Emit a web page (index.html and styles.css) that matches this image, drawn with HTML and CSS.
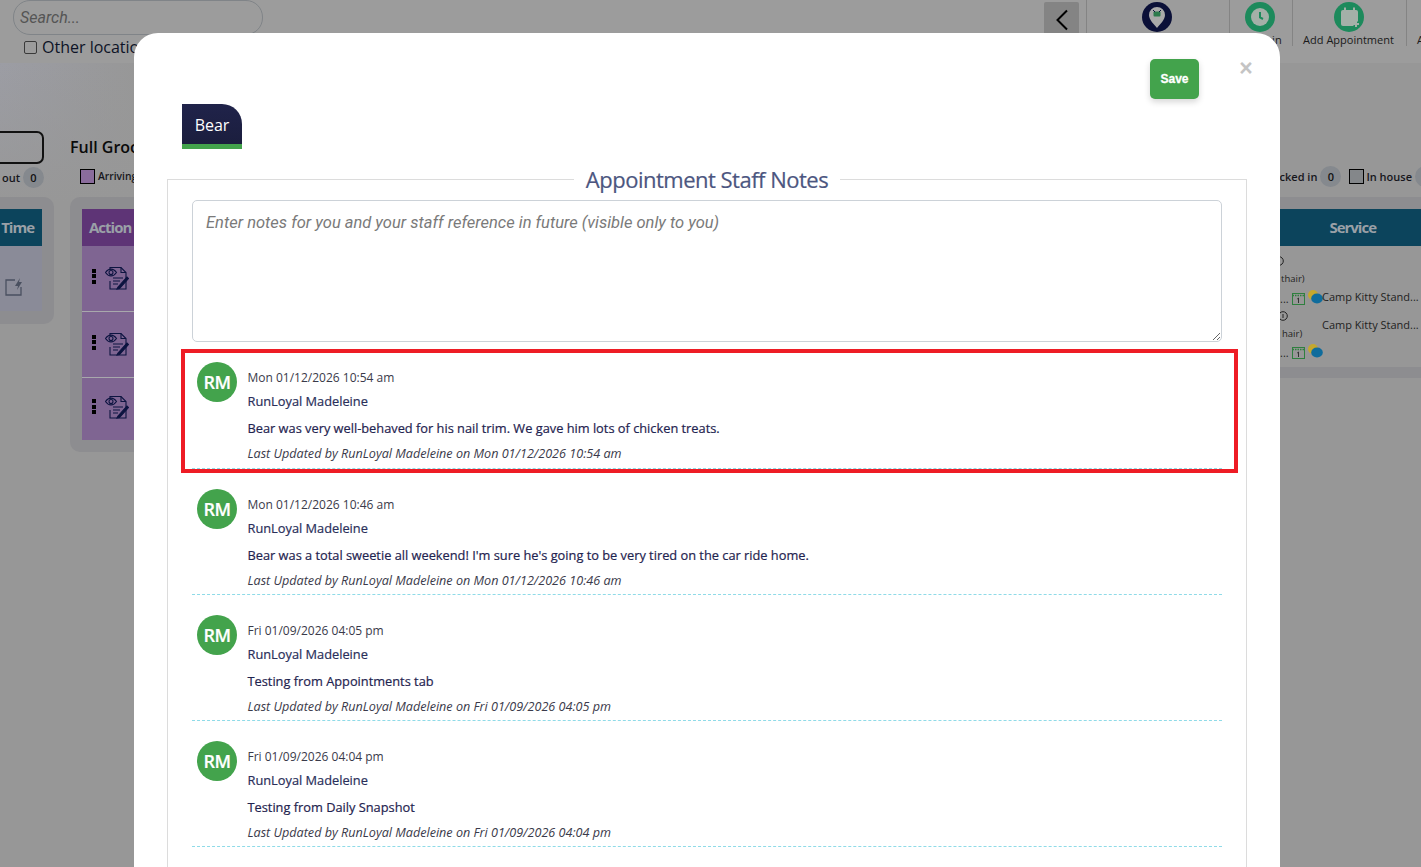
FILE: index.html
```html
<!DOCTYPE html>
<html lang="en">
<head>
<meta charset="utf-8">
<title>Appointment Staff Notes</title>
<link rel="stylesheet" href="styles.css">
</head>
<body>
<div class="app">
  <header class="topbar">
    <div class="search-block">
      <div class="search-input">Search...</div>
      <label class="other-loc"><span class="check"></span>Other locations</label>
    </div>
    <div class="nav">
      <button class="back"><svg width="14" height="22" viewBox="0 0 14 22"><path d="M12 1.500 2.500 11l9.500 9.500" fill="none" stroke="#000" stroke-width="2"/></svg></button>
      <div class="nav-item w143"><span class="nav-icon navy"><svg width="30" height="30" viewBox="0 0 30 30"><path d="M15 5a8 8 0 0 1 8 8c0 5-5 9-8 13-3-4-8-8-8-13a8 8 0 0 1 8-8z" fill="#a9a9a9"/><rect x="11.500" y="9.500" width="7" height="5" rx="1" fill="#2d7a4c"/><path d="M11 8l2 2M19 8l-2 2" stroke="#0b1038" stroke-width="1"/></svg></span></div>
      <div class="nav-item w63"><span class="nav-icon green"><svg width="30" height="30" viewBox="0 0 30 30"><circle cx="15" cy="15" r="9" fill="#a4b0a8"/><path d="M15 10v5.500l3 1.500" fill="none" stroke="#1d8a5c" stroke-width="2"/></svg></span><span class="nav-label">Check in</span></div>
      <div class="nav-item w114"><span class="nav-icon green"><svg width="30" height="30" viewBox="0 0 30 30"><path d="M9 8h13a2 2 0 0 1 2 2v9l-5 5H9a2 2 0 0 1-2-2V10a2 2 0 0 1 2-2z" fill="#a4b0a8"/><path d="M11 5.500v4M20 5.500v4" stroke="#a4b0a8" stroke-width="2"/><path d="M22 19v6M19 22h6" stroke="#a4b0a8" stroke-width="2"/></svg></span><span class="nav-label">Add Appointment</span></div>
      <div class="nav-item w15"><span class="nav-label">A</span></div>
    </div>
  </header>

  <main class="board">
    <div class="filters">
      <div class="filter-left">
        <div class="pill"></div>
        <span class="legend-text">out</span><span class="count">0</span>
      </div>
      <div class="filter-mid">
        <div class="group-title">Full Grooming</div>
        <div class="legend-item"><span class="swatch purple"></span>Arriving</div>
      </div>
      <div class="filter-right">
        <span class="legend-text">Checked in</span><span class="count">0</span>
        <span class="swatch gray"></span><span class="legend-text">In house</span><span class="count"></span>
      </div>
    </div>
    <div class="panels">
      <section class="panel panel-a">
        <div class="thead teal">Time</div>
        <div class="trow-a"><svg width="20" height="20" viewBox="0 0 20 20"><path d="M11 3H2v15h15v-8" fill="none" stroke="#4a5060" stroke-width="1.300"/><path d="M16 1l-5 8h3l-1 4 5-8h-3z" fill="#4a5060"/></svg></div>
      </section>
      <section class="panel panel-b">
        <div class="thead violet">Action</div>
        <div class="trow-b h66"><span class="dots"></span><svg class="note-ico" width="24" height="24" viewBox="0 0 24 24"><use href="#note"/></svg></div>
        <div class="trow-b h66"><span class="dots"></span><svg class="note-ico" width="24" height="24" viewBox="0 0 24 24"><use href="#note"/></svg></div>
        <div class="trow-b h62"><span class="dots"></span><svg class="note-ico" width="24" height="24" viewBox="0 0 24 24"><use href="#note"/></svg></div>
      </section>
      <section class="panel panel-c">
        <div class="thead blue">Service</div>
        <div class="service-rows">
          <div class="svc-left">
            <span class="s0"><svg width="4" height="10" viewBox="0 0 4 10"><circle cx="-1" cy="5" r="4.300" fill="none" stroke="#222"/></svg></span>
            <span class="s1">thair)</span>
            <span class="s2">...<svg class="cal" width="13" height="13" viewBox="0 0 13 13"><use href="#cal"/></svg><svg class="chat" width="15" height="14" viewBox="0 0 15 14"><use href="#chat"/></svg></span>
            <span class="s3"><svg width="10" height="10" viewBox="0 0 10 10"><circle cx="3" cy="5" r="4.300" fill="none" stroke="#222"/><path d="M3 3v4" stroke="#222"/></svg></span>
            <span class="s4">hair)</span>
            <span class="s5">...<svg class="cal" width="13" height="13" viewBox="0 0 13 13"><use href="#cal"/></svg><svg class="chat" width="15" height="14" viewBox="0 0 15 14"><use href="#chat"/></svg></span>
          </div>
          <div class="svc-right">
            <span>Camp Kitty Stand...</span>
            <span>Camp Kitty Stand...</span>
          </div>
        </div>
      </section>
    </div>
  </main>
</div>

<svg class="defs" width="0" height="0">
  <defs>
    <g id="note" fill="none" stroke="#0d1440" stroke-width="1.100">
      <path d="M5 4V1.500h11l5 5V23H5v-8"/>
      <path d="M16 1.500v5h5"/>
      <path d="M.5 6.500c3-4.500 8-4.500 11 0-3 4.500-8 4.500-11 0z"/>
      <circle cx="6" cy="6.500" r="2"/>
      <path d="M8 12h10M8 15h7M8 18h5"/>
      <path d="M13 21l9-10 1.500 1.500-9 10-2.500 .5z" fill="#0d1440"/>
    </g>
    <g id="cal" fill="none" stroke="#2f7f3f">
      <rect x=".5" y="1.500" width="12" height="11"/>
      <path d="M.5 3.500h12" stroke-width="1.500" stroke-dasharray="1.500 1"/>
      <path d="M6.500 6v5M5.200 7l1.300-1" stroke="#333"/>
    </g>
    <g id="chat">
      <ellipse cx="5" cy="5" rx="5" ry="5" fill="#c4a82e"/>
      <ellipse cx="9" cy="8.500" rx="5.800" ry="5" fill="#0f6c9c"/>
    </g>
  </defs>
</svg>

<div class="modal" role="dialog">
  <div class="modal-actions">
    <button class="save">Save</button>
    <span class="close">×</span>
  </div>
  <div class="tabs"><div class="tab">Bear</div></div>
  <fieldset class="notes-box">
    <legend class="notes-title">Appointment Staff Notes</legend>
    <textarea class="notes-input" placeholder="Enter notes for you and your staff reference in future (visible only to you)"></textarea>
    <div class="note-list">
      <article class="note highlighted">
        <div class="avatar">RM</div>
        <div class="note-body">
          <div class="note-date">Mon 01/12/2026 10:54 am</div>
          <div class="note-author">RunLoyal Madeleine</div>
          <div class="note-text">Bear was very well-behaved for his nail trim. We gave him lots of chicken treats.</div>
          <div class="note-meta">Last Updated by RunLoyal Madeleine on Mon 01/12/2026 10:54 am</div>
        </div>
      </article>
      <article class="note">
        <div class="avatar">RM</div>
        <div class="note-body">
          <div class="note-date">Mon 01/12/2026 10:46 am</div>
          <div class="note-author">RunLoyal Madeleine</div>
          <div class="note-text">Bear was a total sweetie all weekend! I'm sure he's going to be very tired on the car ride home.</div>
          <div class="note-meta">Last Updated by RunLoyal Madeleine on Mon 01/12/2026 10:46 am</div>
        </div>
      </article>
      <article class="note">
        <div class="avatar">RM</div>
        <div class="note-body">
          <div class="note-date">Fri 01/09/2026 04:05 pm</div>
          <div class="note-author">RunLoyal Madeleine</div>
          <div class="note-text">Testing from Appointments tab</div>
          <div class="note-meta">Last Updated by RunLoyal Madeleine on Fri 01/09/2026 04:05 pm</div>
        </div>
      </article>
      <article class="note">
        <div class="avatar">RM</div>
        <div class="note-body">
          <div class="note-date">Fri 01/09/2026 04:04 pm</div>
          <div class="note-author">RunLoyal Madeleine</div>
          <div class="note-text">Testing from Daily Snapshot</div>
          <div class="note-meta">Last Updated by RunLoyal Madeleine on Fri 01/09/2026 04:04 pm</div>
        </div>
      </article>
    </div>
  </fieldset>
</div>
```

FILE: styles.css
```css
*, *::before, *::after { box-sizing: border-box; }
html, body { margin: 0; height: 100%; overflow: hidden; }
body { font-family: "Open Sans", sans-serif; color: #000; background: #979797; }
.defs { position: absolute; }

.app { height: 867px; overflow: hidden; }

.topbar { height: 63px; background: #9c9c9c; display: flex; justify-content: space-between; padding-left: 13px; }
.search-block { width: 250px; }
.search-input { height: 35px; border: 1px solid #808488; border-radius: 17px; padding: 7px 6px; font: italic 16px/20px Roboto, sans-serif; color: #555; }
.other-loc { display: flex; align-items: center; gap: 5px; margin: 2px 0 0 11px; font-size: 16px; line-height: 20px; color: #0d1326; white-space: nowrap; }
.check { width: 13px; height: 13px; border: 1px solid #3a3a3a; border-radius: 2px; background: #9c9c9c; }

.nav { display: flex; align-items: flex-start; }
.back { width: 35px; height: 36px; margin: 2px 7px 0 0; padding: 0; border: 0; border-radius: 2px; background: #848484; display: flex; align-items: center; justify-content: center; }
.nav-item { height: 46px; border-left: 1px solid #848484; display: flex; flex-direction: column; align-items: center; }
.w143 { width: 143px; padding-right: 2px; }
.w63 { width: 63px; padding-right: 2px; }
.w114 { width: 114px; padding-right: 2px; }
.w15 { width: 15px; overflow: hidden; align-items: flex-start; padding: 32px 0 0 10px; }
.w15 .nav-label { margin-top: 0; }
.nav-icon { width: 30px; height: 30px; border-radius: 50%; margin-top: 2px; flex: none; }
.nav-icon svg { display: block; }
.navy { background: #0b1038; }
.green { background: #1d8a5c; }
.nav-label { font-size: 11px; line-height: 15px; color: #1a1a1a; white-space: nowrap; }

.board { height: 804px; background: linear-gradient(rgba(151, 151, 151, 0), #979797 140px), linear-gradient(90deg, #9c9da4, #979797 140px); padding-top: 68px; }
.filters { display: flex; height: 66px; }
.filter-left { width: 54px; flex: none; position: relative; }
.pill { width: 60px; height: 33px; margin-left: -16px; border: 2px solid #111; border-radius: 7px; }
.filter-left .legend-text { position: absolute; left: 2px; top: 39px; }
.filter-left .count { position: absolute; left: 23px; top: 36px; }
.legend-text { font-size: 11px; line-height: 15px; font-weight: 600; color: #16161c; white-space: nowrap; }
.count { width: 21px; height: 21px; border-radius: 50%; background: #85898e; font-size: 11px; font-weight: 600; line-height: 21px; text-align: center; color: #111; flex: none; }
.filter-mid { margin-left: 16px; flex: none; width: 400px; }
.group-title { font-size: 16px; font-weight: 600; line-height: 22px; color: #0a0a0a; margin-top: 5px; }
.legend-item { display: flex; align-items: center; gap: 3px; margin: 11px 0 0 10px; font-size: 10.300px; font-weight: 600; color: #16161c; line-height: 15px; }
.swatch { width: 15px; height: 15px; border: 1px solid #000; flex: none; }
.purple { background: #8a6c9c; }
.gray { background: #84878a; }
.filter-right { margin-left: auto; display: flex; align-items: center; gap: 3px; height: 21px; margin-top: 35px; margin-right: -15px; }
.filter-right .swatch { margin: 0 -1px 0 5px; }

.panels { display: flex; align-items: flex-start; gap: 16px; }
.panel { background: #8d8d90; border-radius: 10px; padding: 12px 0; }
.panel-a { width: 54px; height: 127px; flex: none; padding-right: 12px; border-radius: 0 10px 10px 0; }
.panel-b { width: 400px; height: 255px; flex: none; padding-left: 12px; }
.panel-c { flex: 1; height: 181px; border-radius: 0; padding: 12px 0 0; }
.thead { height: 37px; font-size: 15px; font-weight: 700; line-height: 37px; color: #9aa0a7; letter-spacing: -1px; }
.teal { background: #0c445c; text-align: right; padding-right: 8px; }
.violet { background: #5e3476; padding-left: 7px; }
.blue { background: #0c445c; text-align: right; padding-right: 45px; }
.trow-a { height: 65px; background: #8a8b98; display: flex; align-items: center; justify-content: flex-end; padding: 16px 18px 0 0; }
.trow-b { background: #7f6592; border-bottom: 1px solid #a8a8ac; display: flex; align-items: flex-start; }
.trow-b:last-child { border-bottom: 0; }
.h66 { height: 66px; }
.h62 { height: 62px; }
.dots { width: 4px; height: 15px; margin: 23px 0 0 10px; background: repeating-linear-gradient(#000 0 4px, transparent 4px 5.500px); }
.note-ico { margin: 20px 0 0 9px; }
.h62 .dots { margin-top: 21px; }
.h62 .note-ico { margin-top: 17px; }

.service-rows { height: 121px; background: #979797; display: flex; justify-content: flex-end; font-size: 11px; color: #1f1f22; }
.svc-left { width: 42px; position: relative; flex: none; }
.svc-left span { position: absolute; right: 0; left: 0; white-space: nowrap; line-height: 15px; }
.s0 { top: 8px; }
.s1 { top: 25px; padding-left: 1px; font-size: 9.500px; }
.s2 { top: 44px; }
.s3 { top: 63px; }
.s4 { top: 80px; font-size: 9.500px; padding-left: 2px; }
.s5 { top: 98px; }
.cal { margin-left: 3px; vertical-align: -2px; }
.chat { margin-left: 3px; vertical-align: -1px; }
.svc-right { width: 99px; flex: none; display: flex; flex-direction: column; gap: 13px; padding-top: 43px; line-height: 15px; white-space: nowrap; position: relative; }

.modal { position: absolute; left: 134px; top: 33px; width: 1146px; height: 900px; background: #fff; border-radius: 24px 24px 0 0; padding: 26px 33px 0; }
.modal-actions { display: flex; justify-content: flex-end; height: 45px; position: relative; padding-right: 48px; }
.save { width: 49px; height: 40px; border: 0; border-radius: 5px; background: #43a34c; color: #fff; font: 700 12px/40px "Liberation Sans", sans-serif; -webkit-text-stroke: 0.3px #fff; padding: 0; box-shadow: 0 3px 6px rgba(0, 0, 0, 0.16); }
.close { position: absolute; right: -6px; top: -2px; width: 14px; font: 700 23px/22px "Liberation Sans", sans-serif; color: #c4c4c4; text-align: center; }
.tabs { padding-left: 15px; height: 64px; }
.tab { width: 60px; height: 45px; background: linear-gradient(#20234a, #1b1e3e); border-bottom: 5px solid #43a34c; border-radius: 0 20px 0 0; color: #fff; font-size: 16px; line-height: 42px; text-align: center; }
.notes-box { margin: 0; padding: 10px 24px 0; height: 900px; border: 1px solid #dcdcdc; min-width: 0; }
.notes-title { margin: 0 auto; padding: 0 12px; font-size: 22px; line-height: 1; color: #4c5680; text-align: center; letter-spacing: -0.5px; -webkit-text-stroke: 0.2px #4c5680; }
.notes-input { display: block; width: 1030px; height: 142px; border: 1px solid #ccd2d8; border-radius: 5px; padding: 12px 13px; font: italic 16.500px/20px Roboto, sans-serif; color: #333; outline: 0; }
.notes-input::placeholder { color: #7a7a7a; opacity: 1; }
.note-list { display: flex; flex-direction: column; }
.note { height: 126px; display: flex; gap: 11px; padding: 20px 0 0 5px; border-bottom: 1px dashed #8fdbe8; position: relative; }
.highlighted { height: 127px; }
.highlighted::after { content: ""; position: absolute; left: -11px; right: -16px; top: 7px; height: 124px; border: 4px solid #ee1c25; pointer-events: none; }
.avatar { width: 40px; height: 40px; border-radius: 50%; background: #43a34c; color: #fff; font-size: 18px; font-weight: 600; line-height: 41px; text-align: center; letter-spacing: -0.5px; -webkit-text-stroke: 0.2px #fff; flex: none; }
.note-body { flex: 1; margin-left: -0.5px; }
.note-date { font-size: 12px; line-height: 16px; color: #3a3a4a; margin-top: 8px; }
.note-author { font-size: 12.800px; line-height: 18px; font-weight: 500; color: #2a2f5a; margin-top: 6px; -webkit-text-stroke: 0.2px #2a2f5a; }
.note-text { font-size: 12.800px; line-height: 18px; font-weight: 500; color: #1f2450; margin-top: 9px; -webkit-text-stroke: 0.2px #1f2450; }
.note-meta { font-size: 12.600px; line-height: 16px; font-style: italic; color: #3a3a4a; margin-top: 9px; }
```
